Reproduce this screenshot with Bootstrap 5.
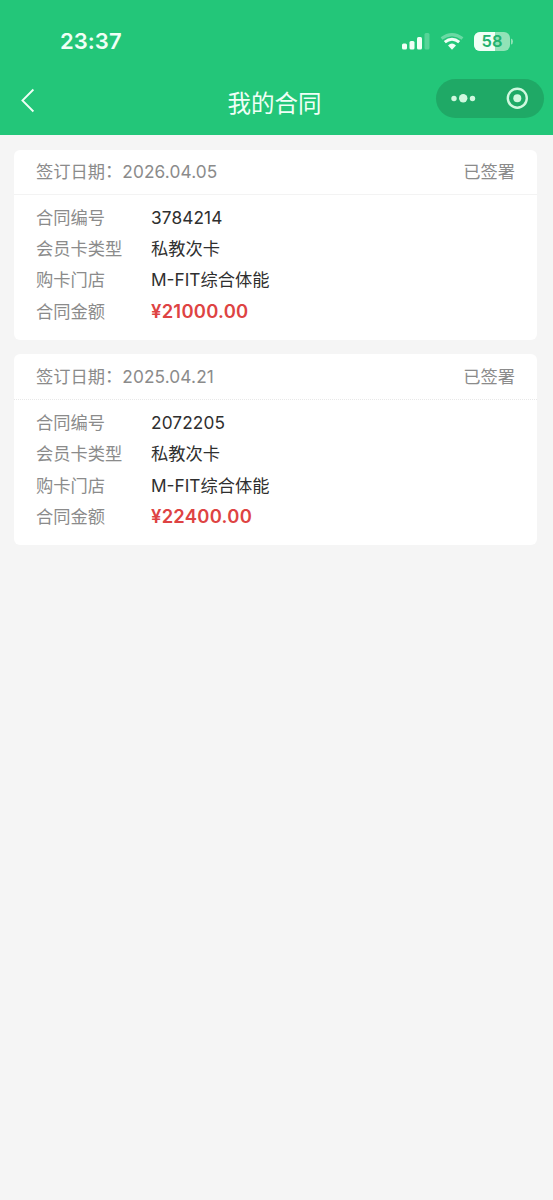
<!DOCTYPE html>
<html lang="zh-CN">
<head>
<meta charset="utf-8">
<meta name="viewport" content="width=device-width, initial-scale=1">
<title>我的合同</title>
<link href="https://cdn.jsdelivr.net/npm/bootstrap@5.3.0/dist/css/bootstrap.min.css" rel="stylesheet">
<style>
body{background:#f5f5f5;font-family:Inter,"Noto Sans CJK SC",sans-serif;font-size:17.25px;line-height:31.4px;color:#2f2f2f;min-height:100vh}
.top-area{background:#23c679;height:135px;color:#f0fff6}
.status-bar{height:79px;padding:4px 40px 0 60px}
.clock{font-size:22px;font-weight:600;letter-spacing:.05px;padding-top:1px}
.title-bar{height:56px;padding:0 9px 0 20px;display:grid;grid-template-columns:108px 1fr 108px}
.title-text{font-size:23.5px;line-height:30px;padding-top:10px;padding-right:15px}
.capsule{width:108px;height:39px;background:#1fa966;color:#d0f8df}
.contracts{padding:14.5px 16px 0 14px;gap:14px}
.contract{border:0;border-radius:6px;height:190.5px}
.contract-head{height:45px;padding:0 22px;border-bottom:1px solid #f3f3f3;color:#8b8b8b}
.contract + .contract .contract-head{height:46px;border-bottom-style:dotted;border-bottom-color:#e8e8e8}
.contract-body{padding:7px 22px 0}
.field-name{width:115px;color:#8b8b8b}
.colon{line-height:1;vertical-align:1.5px}
.num{letter-spacing:.12px}
.price{color:#de4343;font-weight:600;font-size:18.4px;letter-spacing:.27px}
</style>
</head>
<body>
<header class="top-area">
  <div class="status-bar d-flex align-items-center justify-content-between">
    <span class="clock">23:37</span>
    <div class="d-flex align-items-center">
      <svg width="28" height="18" viewBox="0 0 28 18" fill="#f0fff6"><rect x="0" y="10.5" width="5" height="6" rx="1.5"/><rect x="7.5" y="8" width="5" height="8.5" rx="1.5"/><rect x="15" y="4" width="5" height="12.5" rx="1.5"/><rect x="22.5" y="0" width="5" height="16.5" rx="1.5" opacity=".25"/></svg>
      <svg class="ms-2" width="28" height="18" viewBox="0 0 28 18" fill="none" stroke="#f0fff6" stroke-width="3"><path d="M3.5 5.5Q14-2.3 24.5 5.5" opacity=".35"/><path d="M6.8 9.2Q14 3.2 21.2 9.2"/><path d="M10 12.4Q14 8.6 18 12.4L14 16.8Z" fill="#f0fff6" stroke="none"/></svg>
      <svg class="ms-2" width="39" height="20" viewBox="0 0 39 20"><defs><clipPath id="cell"><rect width="36" height="19" rx="6"/></clipPath></defs><g clip-path="url(#cell)"><rect width="36" height="19" fill="#91e3b7"/><rect width="21" height="19" fill="#f0fff6"/></g><path d="M37 6.5Q39 7 39 9.5T37 12.5Z" fill="#91e3b7"/><text x="18" y="15.3" text-anchor="middle" font-size="16.5" font-weight="600" fill="#22b36f">58</text></svg>
    </div>
  </div>
  <div class="title-bar">
    <svg class="mt-2" width="16" height="28" viewBox="0 0 16 28" fill="none" stroke="#f0fff6" stroke-width="1.8"><path d="M13.4 2.5 2.4 13.5 13.4 24.5"/></svg>
    <div class="title-text text-center">我的合同</div>
    <div class="capsule rounded-pill"><svg class="d-block" width="108" height="39" viewBox="0 0 108 39" fill="currentColor"><circle cx="18" cy="19.5" r="2.7"/><circle cx="27.2" cy="19.3" r="4.2"/><circle cx="36.5" cy="19.5" r="2.7"/><circle cx="81.3" cy="19.2" r="9.5" fill="none" stroke="currentColor" stroke-width="2.4"/><circle cx="81.3" cy="19.2" r="4"/></svg></div>
  </div>
</header>
<main class="contracts d-flex flex-column">
  <article class="contract card">
    <div class="contract-head d-flex align-items-center justify-content-between"><span>签订日期<span class="colon">：</span><span class="num">2026.04.05</span></span><span>已签署</span></div>
    <div class="contract-body">
      <div class="d-flex"><span class="field-name">合同编号</span><span class="num">3784214</span></div>
      <div class="d-flex"><span class="field-name">会员卡类型</span><span>私教次卡</span></div>
      <div class="d-flex"><span class="field-name">购卡门店</span><span>M-FIT综合体能</span></div>
      <div class="d-flex"><span class="field-name">合同金额</span><span class="price">¥21000.00</span></div>
    </div>
  </article>
  <article class="contract card">
    <div class="contract-head d-flex align-items-center justify-content-between"><span>签订日期<span class="colon">：</span><span class="num">2025.04.21</span></span><span>已签署</span></div>
    <div class="contract-body">
      <div class="d-flex"><span class="field-name">合同编号</span><span class="num">2072205</span></div>
      <div class="d-flex"><span class="field-name">会员卡类型</span><span>私教次卡</span></div>
      <div class="d-flex"><span class="field-name">购卡门店</span><span>M-FIT综合体能</span></div>
      <div class="d-flex"><span class="field-name">合同金额</span><span class="price">¥22400.00</span></div>
    </div>
  </article>
</main>
<script src="https://cdn.jsdelivr.net/npm/bootstrap@5.3.0/dist/js/bootstrap.bundle.min.js"></script>
</body>
</html>
